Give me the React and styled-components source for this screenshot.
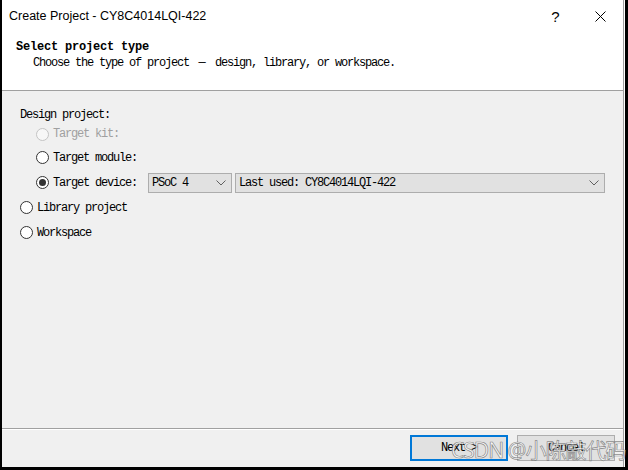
import React from "react";
import styled, { createGlobalStyle } from "styled-components";

const Global = createGlobalStyle`
  html, body { margin: 0; padding: 0; background: #000; }
  * { box-sizing: border-box; }
`;

const mono = `"Liberation Mono", "Noto Sans CJK SC", monospace`;

const Frame = styled.div`
  width: 628px;
  height: 470px;
  background: #000;
  padding: 0 3px 3px 2px;
  position: relative;
  overflow: hidden;
`;

const Window = styled.div`
  height: 100%;
  background: #fff;
  padding-right: 1px;
`;

const Dialog = styled.div`
  height: 100%;
  border-right: 1px solid #a0a0a0;
  display: flex;
  flex-direction: column;
`;

const TitleBar = styled.div`
  height: 32px;
  display: flex;
  align-items: center;
  padding-left: 7px;
  font-family: "Liberation Sans", Arial, sans-serif;
  font-size: 12.5px;
  color: #000;
`;

const TitleText = styled.span`
  flex: 1;
`;

const TitleButton = styled.div`
  width: 45px;
  height: 32px;
  display: flex;
  align-items: center;
  justify-content: center;
  font-family: "Liberation Sans", Arial, sans-serif;
  font-size: 15px;
  color: #000;
`;

const Header = styled.div`
  height: 59px;
  border-bottom: 1px solid #a0a0a0;
  padding: 7px 0 0 14px;
  font-family: ${mono};
  font-size: 12px;
  color: #000;
`;

const HeaderTitle = styled.div`
  height: 16px;
  line-height: 16px;
  font-weight: bold;
  letter-spacing: -0.2px;
`;

const HeaderDesc = styled.div`
  height: 16px;
  line-height: 16px;
  padding-left: 17px;
  letter-spacing: -1.2px;
  white-space: pre;
`;

const Dash = styled.span`
  display: inline-block;
  width: 14px;
  text-align: center;
  letter-spacing: 0;
`;

const Body = styled.div`
  flex: 1;
  background: #f0f0f0;
  border-bottom: 1px solid #a0a0a0;
  padding: 16px 0 0 18px;
  font-family: ${mono};
  font-size: 12px;
  letter-spacing: -1.2px;
  color: #000;
`;

const GroupLabel = styled.div`
  height: 16px;
  line-height: 16px;
`;

const Row = styled.div`
  height: ${(p) => p.$h || 25}px;
  display: flex;
  align-items: center;
  padding-left: ${(p) => (p.$indent ? 16 : 0)}px;
  color: ${(p) => (p.$disabled ? "#a0a0a0" : "#000")};
`;

const Radio = styled.span`
  width: 13px;
  height: 13px;
  border-radius: 50%;
  border: 1px solid ${(p) => (p.$disabled ? "#c4c4c4" : "#333")};
  background: ${(p) => (p.$disabled ? "#f7f7f7" : "#fff")};
  display: inline-flex;
  align-items: center;
  justify-content: center;
  margin-right: 4px;
  flex: none;
  &::after {
    content: "";
    width: 7px;
    height: 7px;
    border-radius: 50%;
    background: #333;
    display: ${(p) => (p.$checked ? "block" : "none")};
  }
`;

const RowLabel = styled.span`
  white-space: pre;
`;

const Combo = styled.div`
  width: ${(p) => p.$w}px;
  height: 20px;
  margin-left: ${(p) => p.$ml}px;
  background: #e1e1e1;
  border: 1px solid #adadad;
  display: flex;
  align-items: center;
  padding: 0 4px 0 3px;
  flex: none;
`;

const ComboText = styled.span`
  flex: 1;
  white-space: pre;
`;

const Chevron = () => (
  <svg width="10" height="6" viewBox="0 0 10 6" style={{ marginRight: 1 }}>
    <path d="M0.5 0.5 L5 5 L9.5 0.5" fill="none" stroke="#606060" strokeWidth="1" />
  </svg>
);

const Footer = styled.div`
  height: 38px;
  background: #f0f0f0;
  border-top: 1px solid #fff;
  display: flex;
  justify-content: flex-end;
  align-items: flex-start;
  gap: 9px;
  padding: 5px 8px 0 0;
`;

const Button = styled.div`
  width: 98px;
  height: 26px;
  background: #e1e1e1;
  border: ${(p) => (p.$primary ? "2px solid #0078d7" : "1px solid #adadad")};
  display: flex;
  align-items: center;
  justify-content: center;
  font-family: ${mono};
  font-size: 12px;
  letter-spacing: -1.2px;
  color: #000;
`;

const Watermark = styled.div`
  position: absolute;
  left: 451px;
  top: 434px;
  font-family: "Noto Sans", "Noto Sans CJK SC", sans-serif;
  font-size: 21px;
  letter-spacing: -1px;
  color: rgba(255, 255, 255, 0.8);
  -webkit-text-stroke: 0.7px rgba(100, 100, 100, 0.75);
  white-space: nowrap;
  pointer-events: none;
`;

export default function App() {
  return (
    <>
      <Global />
      <Frame>
        <Window>
          <Dialog>
            <TitleBar>
              <TitleText>Create Project - CY8C4014LQI-422</TitleText>
              <TitleButton>?</TitleButton>
              <TitleButton>
                <svg width="11" height="11" viewBox="0 0 11 11">
                  <path d="M0.5 0.5 L10.5 10.5 M10.5 0.5 L0.5 10.5" stroke="#000" strokeWidth="1" />
                </svg>
              </TitleButton>
            </TitleBar>
            <Header>
              <HeaderTitle>Select project type</HeaderTitle>
              <HeaderDesc>
                Choose the type of project <Dash>—</Dash> design, library, or workspace.
              </HeaderDesc>
            </Header>
            <Body>
              <GroupLabel>Design project:</GroupLabel>
              <Row $indent $disabled $h={22}>
                <Radio $disabled />
                <RowLabel>Target kit:</RowLabel>
              </Row>
              <Row $indent>
                <Radio />
                <RowLabel>Target module:</RowLabel>
              </Row>
              <Row $indent>
                <Radio $checked />
                <RowLabel>Target device:</RowLabel>
                <Combo $w={84} $ml={11}>
                  <ComboText>PSoC 4</ComboText>
                  <Chevron />
                </Combo>
                <Combo $w={370} $ml={3}>
                  <ComboText>Last used: CY8C4014LQI-422</ComboText>
                  <Chevron />
                </Combo>
              </Row>
              <Row>
                <Radio />
                <RowLabel>Library project</RowLabel>
              </Row>
              <Row>
                <Radio />
                <RowLabel>Workspace</RowLabel>
              </Row>
            </Body>
            <Footer>
              <Button $primary>Next &gt;</Button>
              <Button>Cancel</Button>
            </Footer>
          </Dialog>
        </Window>
        <Watermark>CSDN @小陈敲代码</Watermark>
      </Frame>
    </>
  );
}
